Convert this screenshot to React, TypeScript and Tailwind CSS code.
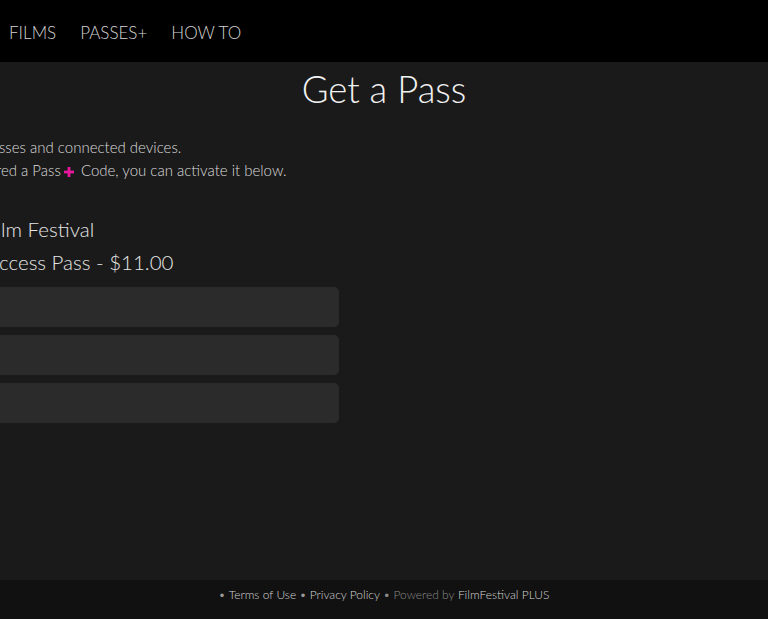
import React from 'react'

const NAV = ['FILMS', 'PASSES+', 'HOW TO']

function PassField() {
  return <div className="h-[40px] w-[360px] -ml-[21px] rounded-[5px] bg-[#2b2b2b]" />
}

function PinkPlus() {
  return (
    <svg viewBox="0 0 10 10" className="mx-[3px] inline-block h-[10px] w-[10px] align-[-1px]" aria-hidden="true">
      <rect x="3.6" y="0" width="2.8" height="10" fill="#e8189c" />
      <rect x="0" y="3.6" width="10" height="2.8" fill="#e8189c" />
    </svg>
  )
}

export default function App() {
  return (
    <div className="flex h-[619px] w-[768px] flex-col overflow-hidden bg-[#1a1a1a] font-['Lato','Liberation_Sans',sans-serif] text-[#d4d4d4]">
      {/* ── Header ─────────────────────────────────────────── */}
      <header className="flex h-[62px] shrink-0 items-center gap-[24px] bg-black pl-[9px] pt-[4px]">
        {NAV.map((item) => (
          <a key={item} className="text-[17px] font-light text-[#d4d4d4]">
            {item}
          </a>
        ))}
      </header>

      {/* ── Main ───────────────────────────────────────────── */}
      <main className="flex-1 overflow-hidden">
        <h1 className="text-center text-[36.5px] font-light leading-[54px] text-[#f2f2f2]">
          Get a Pass
        </h1>

        <div className="mt-[20px] text-[15px] font-light leading-[23px] text-[#dadada]">
          <p className="-ml-[1px]">sses and connected devices.</p>
          <p className="-ml-[4px]">
            red a Pass<PinkPlus />&nbsp;Code, you can activate it below.
          </p>
        </div>

        <div className="mt-[31px] text-[20.5px] font-light leading-[33px] text-[#e6e6e6]">
          <p className="ml-[1px]">lm Festival</p>
          <p className="-ml-[1px]">ccess Pass - $11.00</p>
        </div>

        <div className="mt-[8px] flex flex-col gap-[8px]">
          <PassField />
          <PassField />
          <PassField />
        </div>
      </main>

      {/* ── Footer ─────────────────────────────────────────── */}
      <footer className="flex h-[39px] shrink-0 justify-center bg-[#111111] pt-[6px] text-[12px] font-light text-[#d4d4d4]">
        <span className="text-[#9a9a9a]">•</span>&nbsp;<a>Terms of Use</a>&nbsp;
        <span className="text-[#9a9a9a]">•</span>&nbsp;<a>Privacy Policy</a>&nbsp;
        <span className="text-[#8a8a8a]">• Powered by</span>&nbsp;<a>FilmFestival PLUS</a>
      </footer>
    </div>
  )
}
